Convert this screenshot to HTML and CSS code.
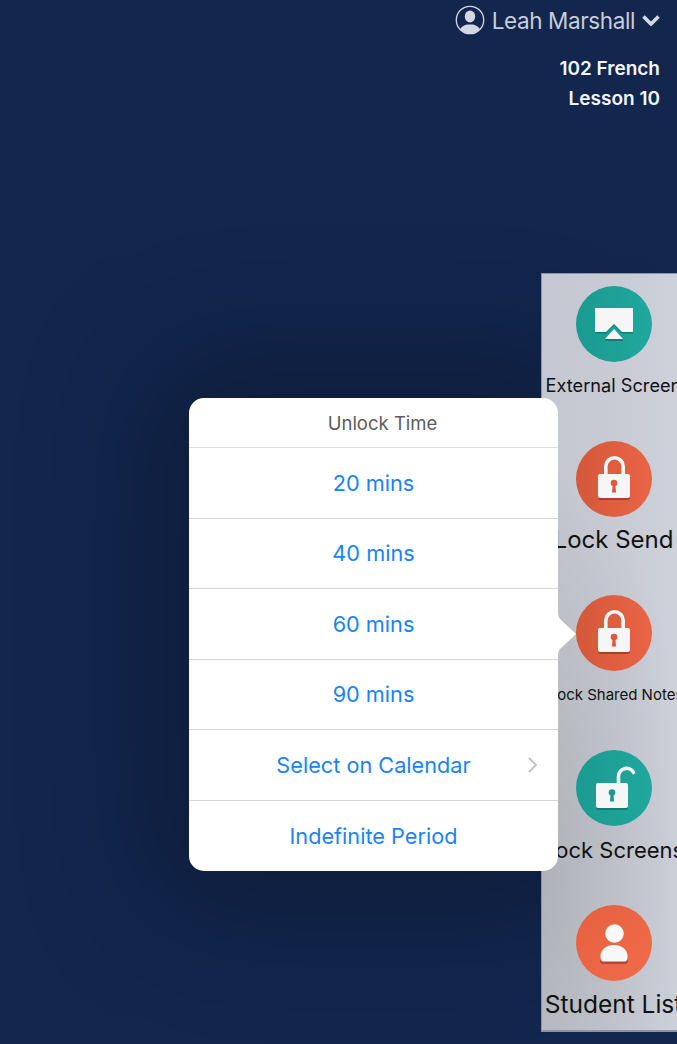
FILE: index.html
```html
<!DOCTYPE html>
<html>
<head>
    <meta charset="UTF-8">
    <title>Unlock Time</title>
    <link rel="stylesheet" href="styles.css">
</head>
<body>
    <div class="pop-glow"></div>

    <div class="page">
        <div class="top">
            <div class="user">
                <svg class="avatar" width="30" height="30" viewBox="0 0 30 30">
                    <defs><clipPath id="ring"><circle cx="15" cy="15" r="13.5"/></clipPath></defs>
                    <g clip-path="url(#ring)" fill="#d4d8e2">
                        <ellipse cx="15" cy="11.5" rx="5.2" ry="6"/>
                        <path d="M4 30c0-7 3-9 8-10.500h6c5 1.500 8 3.500 8 10.500z"/>
                    </g>
                    <circle cx="15" cy="15" r="13.700" fill="none" stroke="#d4d8e2" stroke-width="1.300"/>
                </svg>
                <span class="user-name">Leah Marshall</span>
                <svg class="chevron" width="20" height="12" viewBox="0 0 20 12">
                    <path d="M2.500 2.500L10 10l7.500-7.500" fill="none" stroke="#d4d8e2" stroke-width="3.600"/>
                </svg>
            </div>
            <div class="course">102 French</div>
            <div class="course">Lesson 10</div>
        </div>

        <div class="panel">
            <div class="tool">
                <div class="circle teal">
                    <svg width="76" height="76" viewBox="0 0 76 76">
                        <path d="M19 23.500h38v24H46l-8-8-8 8H19z" fill="#0f7f76"/>
                        <path d="M19 22h38v24H46l-8-8-8 8H19z" fill="#f6f6f6"/>
                        <path d="M38 43l9 10H29z" fill="#f6f6f6"/>
                        <rect x="29" y="53" width="18" height="2" fill="#0f7f76"/>
                    </svg>
                </div>
                <span class="label small">External Screen</span>
            </div>
            <div class="tool">
                <div class="circle red">
                    <svg width="76" height="76" viewBox="0 0 76 76">
                        <path d="M29.800 34v-8.500a8.700 8.700 0 0 1 17.400 0V34" fill="none" stroke="#f6f6f6" stroke-width="3.600"/>
                        <rect x="22" y="35" width="32" height="24" rx="2" fill="#a8402a"/>
                        <rect x="22" y="33" width="32" height="24" rx="2" fill="#f6f6f6"/>
                        <circle cx="38" cy="42" r="3.300" fill="#e0593c"/>
                        <path d="M36.700 43h2.600l.8 8.500h-4.200z" fill="#e0593c"/>
                    </svg>
                </div>
                <span class="label big">Lock Send</span>
            </div>
            <div class="tool">
                <div class="circle red">
                    <svg width="76" height="76" viewBox="0 0 76 76">
                        <path d="M29.800 34v-8.500a8.700 8.700 0 0 1 17.400 0V34" fill="none" stroke="#f6f6f6" stroke-width="3.600"/>
                        <rect x="22" y="35" width="32" height="24" rx="2" fill="#a8402a"/>
                        <rect x="22" y="33" width="32" height="24" rx="2" fill="#f6f6f6"/>
                        <circle cx="38" cy="42" r="3.300" fill="#e0593c"/>
                        <path d="M36.700 43h2.600l.8 8.500h-4.200z" fill="#e0593c"/>
                    </svg>
                </div>
                <span class="label tiny">Lock Shared Notes</span>
            </div>
            <div class="tool">
                <div class="circle teal">
                    <svg width="76" height="76" viewBox="0 0 76 76">
                        <path d="M42.500 34v-7.500a8 8 0 0 1 15-4" fill="none" stroke="#f6f6f6" stroke-width="3.600" stroke-linecap="round"/>
                        <rect x="20" y="35" width="32" height="25" rx="2" fill="#0f7f76"/>
                        <rect x="20" y="33" width="32" height="25" rx="2" fill="#f6f6f6"/>
                        <circle cx="36" cy="42.500" r="3.300" fill="#1a9c92"/>
                        <path d="M34.700 43h2.600l.8 8.500h-4.200z" fill="#1a9c92"/>
                    </svg>
                </div>
                <span class="label mid">Lock Screens</span>
            </div>
            <div class="tool">
                <div class="circle orange">
                    <svg width="76" height="76" viewBox="0 0 76 76">
                        <path d="M27 54h22c2.500 0 3 2 3 2.500S51 59 49 59H27c-2 0-3-2-3-2.500s.500-2.500 3-2.500z" fill="#b14a35"/>
                        <circle cx="38.500" cy="28.500" r="9.300" fill="#f8f8f8"/>
                        <path d="M24.500 51c0-6.500 6-11 13.500-11s13.500 4.500 13.500 11c0 4-1 5.500-3 5.500h-21c-2 0-3-1.500-3-5.500z" fill="#f8f8f8"/>
                    </svg>
                </div>
                <span class="label list">Student List</span>
            </div>
        </div>
    </div>

    <div class="popover">
        <div class="pop-title">Unlock Time</div>
        <div class="pop-row">20 mins</div>
        <div class="pop-row">40 mins</div>
        <div class="pop-row">60 mins</div>
        <div class="pop-row">90 mins</div>
        <div class="pop-row">
            Select on Calendar
            <svg class="more" width="12" height="18" viewBox="0 0 12 18">
                <path d="M2 2l7 7-7 7" fill="none" stroke="#c4c4c8" stroke-width="2"/>
            </svg>
        </div>
        <div class="pop-row">Indefinite Period</div>
        <svg class="arrow" width="18" height="44" viewBox="0 0 18 44">
            <path d="M0 0c0 4 1 6 3 8l14 13c.8.700.8 1.300 0 2L3 36c-2 2-3 4-3 8z" fill="#fff"/>
        </svg>
    </div>
</body>
</html>
```

FILE: styles.css
```css
html, body {
    margin: 0;
    height: 100%;
}
body {
    background-color: #12264e;
    font-family: "Inter", "Liberation Sans", sans-serif;
    overflow: hidden;
    position: relative;
    width: 677px;
    height: 1044px;
}
.page {
    position: relative;
    display: flex;
    flex-direction: column;
    height: 1044px;
}

.top {
    height: 273px;
    box-sizing: border-box;
    padding: 5px 17px 0 0;
    display: flex;
    flex-direction: column;
    align-items: flex-end;
}
.user {
    display: flex;
    align-items: center;
    height: 30px;
    margin-bottom: 19px;
    color: #c8cdd9;
    font-size: 22.500px;
    letter-spacing: -0.4px;
}
.avatar {
    margin-right: 7px;
}
.chevron {
    margin-left: 6px;
    margin-right: -1px;
}
.course {
    color: #f4f5f8;
    font-size: 19px;
    font-weight: 600;
    letter-spacing: 0;
    line-height: 30px;
}

.panel {
    margin-left: 541px;
    height: 759px;
    box-sizing: border-box;
    padding-top: 12px;
    width: 136px;
    overflow: hidden;
    background:
        radial-gradient(ellipse 150px 420px at 0 600px, rgba(0,0,0,0.11), rgba(0,0,0,0) 100%),
        linear-gradient(90deg, #c4c7cf 0%, #c9ccd4 60%, #cdd1da 100%);
    border-top: 1px solid #8d93a3;
    border-left: 1px solid #8d93a3;
    border-bottom: 2px solid #8d93a3;
}
.tool {
    width: 146px;
    height: 154.700px;
    display: flex;
    flex-direction: column;
    align-items: center;
    margin-left: -1.500px;
}
.circle {
    width: 76px;
    height: 76px;
    flex: none;
    border-radius: 50%;
}
.circle svg {
    display: block;
}
.teal {
    background: linear-gradient(90deg, #1b9a90, #20a89e);
}
.red {
    background: linear-gradient(90deg, #d4583a, #ea6446);
}
.orange {
    background: linear-gradient(135deg, #e5603f, #f26c4c);
}
.label {
    white-space: nowrap;
    color: #111;
    text-align: center;
}
.small {
    font-size: 18.200px;
    line-height: 20px;
    margin-top: 13px;
}
.tiny {
    font-size: 15px;
    line-height: 20px;
    margin-top: 14px;
    padding-left: 5px;
}
.mid {
    font-size: 22px;
    line-height: 28px;
    margin-top: 10px;
}
.big {
    font-size: 24px;
    line-height: 30px;
    margin-top: 8px;
}
.list {
    font-size: 24.500px;
    line-height: 30px;
    margin-top: 8px;
}

.pop-glow {
    position: absolute;
    left: 189px;
    top: 398px;
    width: 369px;
    height: 473px;
    border-radius: 15px;
    box-shadow: 0 0 130px 40px rgba(0,0,0,0.28);
}
.popover {
    position: absolute;
    left: 189px;
    top: 398px;
    width: 369px;
    height: 473px;
    background-color: #fff;
    border-radius: 15px;
}
.pop-title {
    height: 50px;
    box-sizing: border-box;
    display: flex;
    align-items: center;
    justify-content: center;
    padding-left: 18px;
    color: #5c5c5c;
    font-size: 18.500px;
    border-bottom: 1px solid #dedede;
}
.pop-row {
    position: relative;
    height: 70.500px;
    box-sizing: border-box;
    display: flex;
    align-items: center;
    justify-content: center;
    color: #1a82fb;
    font-size: 21.700px;
    border-bottom: 1px solid #d8d8d8;
}
.pop-row:last-of-type {
    border-bottom: none;
}
.more {
    position: absolute;
    right: 19px;
    top: 26px;
}
.arrow {
    position: absolute;
    left: 369px;
    top: 214px;
}
```
